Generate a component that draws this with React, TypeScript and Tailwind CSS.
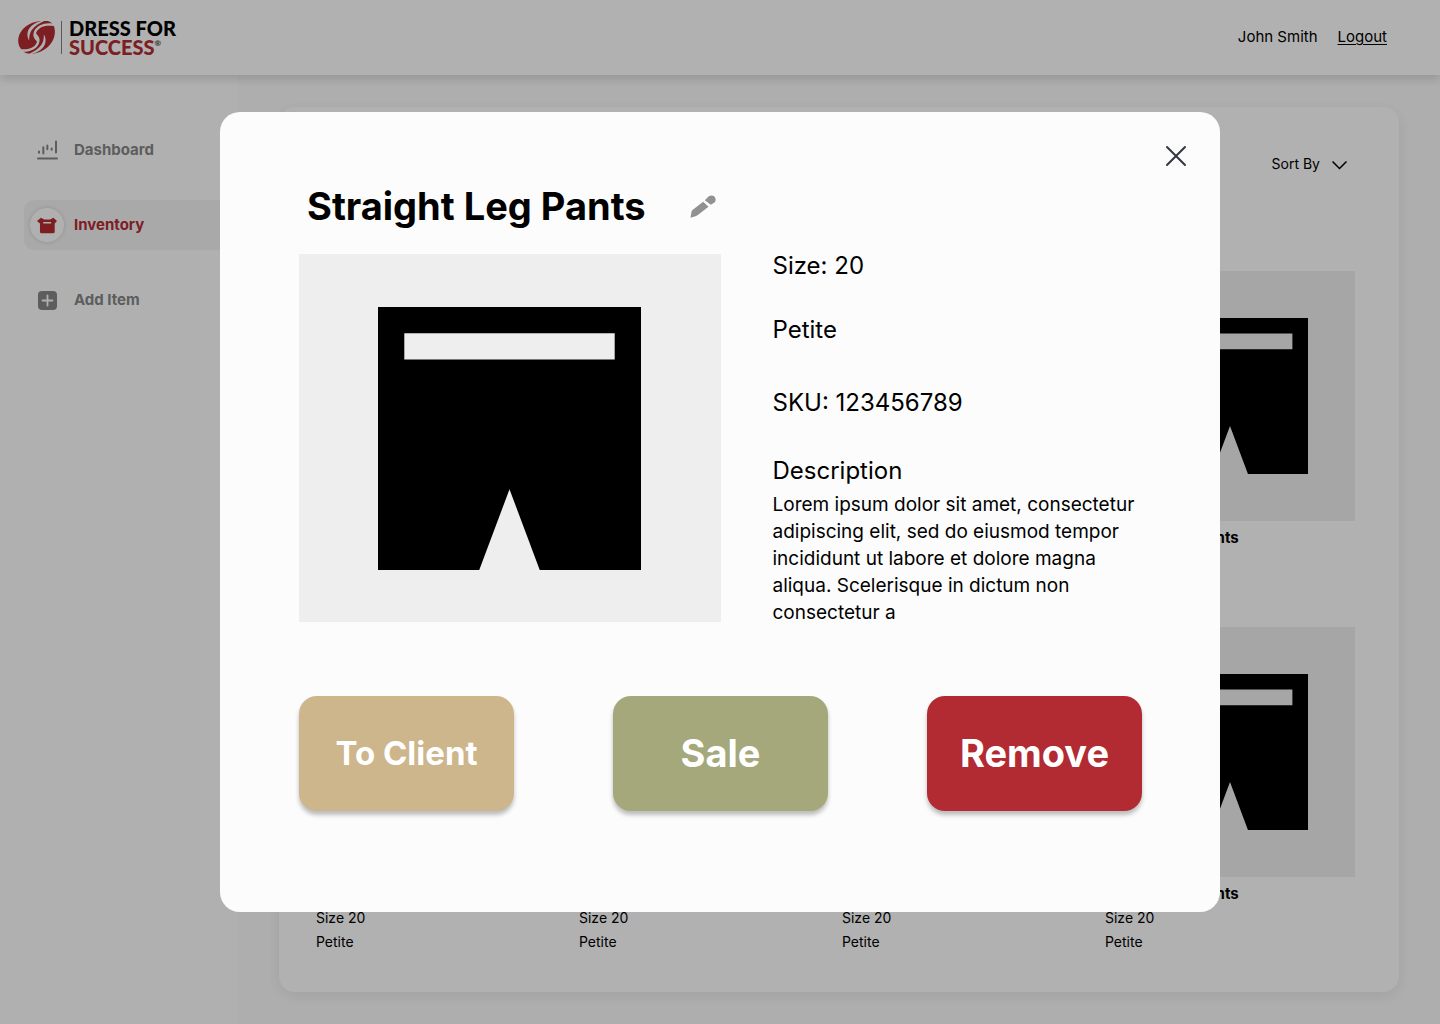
import type { ReactNode } from "react";

function Emblem() {
  return (
    <svg viewBox="0 0 110 98" className="h-[33px] w-[37px] shrink-0" aria-hidden="true">
      <path
        d="M88 0C104 3 112 18 109 40C105 68 80 92 46 97C32 99 20 97 14 88C3 80-1 66 1 52C5 24 34 3 66 0C75-1 82-1 88 0Z"
        fill="#b42c33"
      />
      {["", "rotate(180 55 49)"].map((turn) => (
        <g key={turn} transform={turn || undefined} fill="#fdfdfd">
          <path d="M106 8C80 3 58 12 49 29C43 41 46 50 54 58C59 64 58 71 50 80C63 71 65 62 58 53C52 46 51 37 57 29C66 17 82 11 108 15Z" />
          <path d="M84-3C54 1 34 14 29 32C27 42 28 50 33 58C33 44 35 33 44 23C53 12 66 6 84-3Z" />
        </g>
      ))}
    </svg>
  );
}

function Logo() {
  return (
    <a href="#" aria-label="Dress for Success" className="flex items-center">
      <Emblem />
      <span className="ml-1.5 h-[33px] w-px bg-[#808080]" />
      <span className="ml-[7px] flex flex-col font-['Lato',sans-serif] text-[20px] leading-[19px] font-black">
        <span className="text-black">DRESS FOR</span>
        <span className="flex text-[#b42c33]">
          SUCCESS<span className="text-[8px] leading-[10px] font-bold text-[#444444]">®</span>
        </span>
      </span>
    </a>
  );
}

function ChartIcon() {
  return (
    <svg viewBox="111 65 63 59" className="h-5 w-[21px]" fill="none" stroke="currentColor" strokeWidth="6" strokeLinecap="round" aria-hidden="true">
      <path d="M117 99V103M130 86V105M142 81V92M155 90V94M168 69V102" />
      <path d="M114 120H171" />
    </svg>
  );
}

function BoxIcon() {
  return (
    <svg viewBox="111 290 61 50" className="h-[17px] w-5" fill="currentColor" aria-hidden="true">
      <path
        fillRule="evenodd"
        d="M123 291L133 297H151L161 291L172 301L165 309V334Q165 339 160 339H125Q120 339 120 334V309L111 301ZM130 304V309H154V304Z"
      />
    </svg>
  );
}

function AddIcon() {
  return (
    <svg viewBox="0 0 19 19" className="size-[19px]" aria-hidden="true">
      <rect width="19" height="19" rx="4" fill="currentColor" />
      <path d="M9.5 4.5V14.5M4.500 9.500H14.500" stroke="#fdfdfd" strokeWidth="1.8" strokeLinecap="round" />
    </svg>
  );
}

function PencilIcon() {
  return (
    <svg viewBox="1199 70 77 69" className="h-[23px] w-[26px]" fill="#919191" aria-hidden="true">
      <path d="M1200 138L1203 120Q1204 117 1206 115L1238 90L1254 105L1221 131Q1218 133 1215 134Z" />
      <path d="M1243 86L1255 74Q1262 69 1270 73Q1277 79 1275 87Q1273 92 1268 95L1261 99Z" />
    </svg>
  );
}

function PantsIcon({ className }: { className: string }) {
  return (
    <svg viewBox="0 0 10 10" className={className} role="img" aria-label="Straight Leg Pants">
      <path fillRule="evenodd" d="M0 0H10V10H6.15L5 6.930L3.850 10H0ZM1 1V2H9V1Z" />
    </svg>
  );
}

function NavItem({ icon, label, active = false }: { icon: ReactNode; label: string; active?: boolean }) {
  return (
    <a
      href="#"
      aria-current={active ? "page" : undefined}
      className={
        active
          ? "flex h-[50px] items-center gap-2.5 rounded-l-[10px] bg-[#f2f2f2] pl-1.5 text-[#b42c33]"
          : "flex h-[50px] items-center gap-2.5 rounded-l-[10px] pl-1.5 text-[#868686]"
      }
    >
      <span
        className={
          active
            ? "flex size-[34px] items-center justify-center rounded-full bg-[#fdfdfd] shadow-[0_0_4px_rgba(0,0,0,0.15)]"
            : "flex size-[34px] items-center justify-center"
        }
      >
        {icon}
      </span>
      <span className="text-[15px] font-bold">{label}</span>
    </a>
  );
}

function ItemCard() {
  return (
    <article>
      <div className="flex h-[250px] items-center justify-center bg-[#eeeeee]">
        <PantsIcon className="size-[156px]" />
      </div>
      <h2 className="mt-[5px] text-[15px] leading-6 font-bold">Straight Leg Pants</h2>
      <p className="text-sm leading-6">Size 20</p>
      <p className="text-sm leading-6">Petite</p>
    </article>
  );
}

const actions = [
  { label: "To Client", style: "bg-[#cdb58c] text-[33px]" },
  { label: "Sale", style: "bg-[#a5a87b] text-[38px]" },
  { label: "Remove", style: "bg-[#b22a32] text-[38px]" },
];

function ItemDialog() {
  return (
    <div className="fixed inset-0 z-20 flex items-center justify-center bg-black/30">
      <section
        role="dialog"
        aria-modal="true"
        aria-labelledby="item-title"
        className="relative w-full max-w-[1000px] rounded-[20px] bg-[#fcfcfc] pt-[70px] pr-[78px] pb-[101px] pl-[79px]"
      >
        <button type="button" aria-label="Close" className="absolute top-8 right-8">
          <svg viewBox="0 0 24 24" className="size-6" stroke="#33363f" strokeWidth="2" strokeLinecap="round" aria-hidden="true">
            <path d="M3 3L21 21M21 3L3 21" />
          </svg>
        </button>

        <div className="flex gap-[52px]">
          <div className="w-1/2 shrink-0">
            <div className="flex h-12 items-center justify-between pr-[5px] pl-2">
              <h1 id="item-title" className="text-[38px] leading-[48px] font-bold">
                Straight Leg Pants
              </h1>
              <button type="button" aria-label="Edit item">
                <PencilIcon />
              </button>
            </div>
            <div className="mt-6 flex h-[368px] items-center justify-center bg-[#eeeeee]">
              <PantsIcon className="size-[263px]" />
            </div>
          </div>
          <div className="grow pt-[72px] text-2xl leading-6">
            <p>Size: 20</p>
            <p className="mt-10">Petite</p>
            <p className="mt-[49px]">SKU: 123456789</p>
            <h2 className="mt-11">Description</h2>
            <p className="mt-2 text-[19px] leading-[27px]">
              Lorem ipsum dolor sit amet, consectetur adipiscing elit, sed do eiusmod tempor incididunt ut labore et
              dolore magna aliqua. Scelerisque in dictum non consectetur a
            </p>
          </div>
        </div>

        <div className="mt-[70px] flex justify-between">
          {actions.map((action) => (
            <button
              key={action.label}
              type="button"
              className={`h-[115px] w-[215px] rounded-[18px] font-bold text-white shadow-[0_4px_4px_rgba(0,0,0,0.25)] ${action.style}`}
            >
              {action.label}
            </button>
          ))}
        </div>
      </section>
    </div>
  );
}

export default function App() {
  return (
    <div className="flex min-h-screen flex-col bg-[#fafafa] font-['Inter',sans-serif] text-black">
      <header className="relative z-10 flex h-[75px] items-center justify-between bg-[#fefefe] pr-[53px] pl-[18px] shadow-[0_4px_10px_rgba(0,0,0,0.15)]">
        <Logo />
        <div className="flex items-center gap-5 text-[15px]">
          <span>John Smith</span>
          <a href="#" className="underline underline-offset-2">
            Logout
          </a>
        </div>
      </header>

      <div className="flex grow">
        <nav className="flex w-[238px] shrink-0 flex-col gap-[25px] bg-[#fdfdfd] pt-[50px] pl-6">
          <NavItem icon={<ChartIcon />} label="Dashboard" />
          <NavItem icon={<BoxIcon />} label="Inventory" active />
          <NavItem icon={<AddIcon />} label="Add Item" />
        </nav>

        <main className="grow px-[41px] py-8">
          <div className="rounded-2xl bg-[#fefefe] pt-[46px] pr-11 pb-[38px] pl-[37px] shadow-[0_4px_16px_rgba(0,0,0,0.08)]">
            <div className="flex justify-end pr-2">
              <button type="button" className="flex items-center gap-3 text-sm leading-[22px]">
                Sort By
                <svg viewBox="0 0 15 9" className="mt-0.5 h-[9px] w-[15px]" fill="none" stroke="#000000" strokeWidth="1.5" aria-hidden="true">
                  <path d="M.5 .5L7.500 7.500L14.500 .5" />
                </svg>
              </button>
            </div>
            <div className="mt-24 grid grid-cols-4 gap-x-[13px] gap-y-[29px]">
              {Array.from({ length: 8 }, (_, i) => (
                <ItemCard key={i} />
              ))}
            </div>
          </div>
        </main>
      </div>

      <ItemDialog />
    </div>
  );
}
